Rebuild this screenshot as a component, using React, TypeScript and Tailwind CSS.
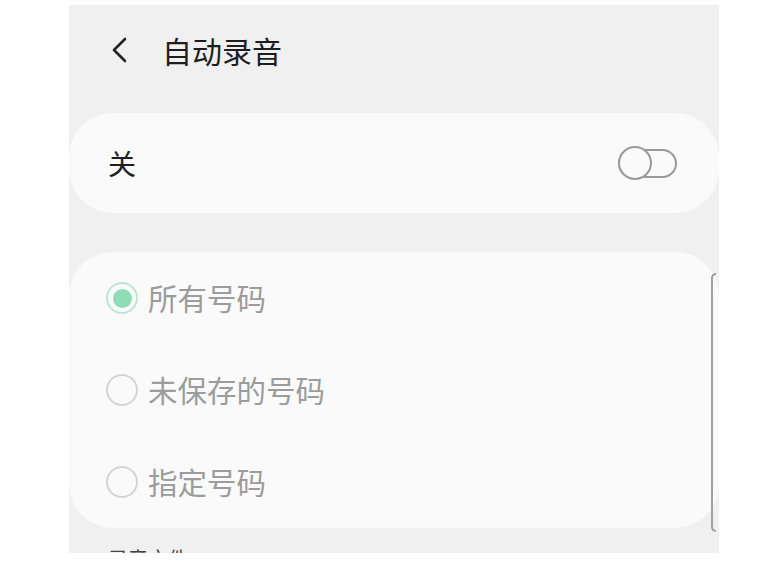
import React from "react";

const font = { fontFamily: '"Noto Sans CJK SC", "Noto Sans", sans-serif' };

function Radio({ checked }: { checked?: boolean }) {
  return checked ? (
    <div className="w-[32px] h-[32px] rounded-full border-2 border-[#bde6d2] flex items-center justify-center shrink-0">
      <div className="w-[19px] h-[19px] rounded-full bg-[#8fdcb6]" />
    </div>
  ) : (
    <div className="w-[32px] h-[32px] rounded-full border-2 border-[#d4d4d4] shrink-0" />
  );
}

export default function App() {
  const options = [
    { label: "所有号码", checked: true },
    { label: "未保存的号码" },
    { label: "指定号码" },
  ];
  return (
    <div className="w-[776px] h-[561px] bg-white overflow-hidden" style={font}>
      <div className="ml-[69px] mt-[5px] w-[650px] h-[548px] bg-[#f0f0f0] overflow-hidden relative flex flex-col">
        <div className="h-[90px] flex items-center pl-[42px] shrink-0">
          <svg width="17" height="26" viewBox="0 0 17 26" fill="none" className="shrink-0">
            <path d="M14 2 L3 13 L14 24" stroke="#222" strokeWidth="2.6" strokeLinecap="round" strokeLinejoin="round" />
          </svg>
          <span className="ml-[34px] text-[30px] leading-none text-[#1e1e1e]">自动录音</span>
        </div>
        <div className="mt-[18px] h-[100px] rounded-[44px] bg-[#fafafa] flex items-center justify-between pl-[39px] pr-[42px] shrink-0">
          <span className="text-[28px] leading-none text-[#1e1e1e]">关</span>
          <div className="relative w-[59px] h-[34px] flex items-center">
            <div className="absolute left-0 right-0 top-[3px] h-[29px] rounded-full border-2 border-[#9a9a9a]" />
            <div className="absolute left-0 top-0 w-[34px] h-[34px] rounded-full border-2 border-[#9a9a9a] bg-[#fafafa]" />
          </div>
        </div>
        <div className="mt-[39px] h-[276px] rounded-[44px] bg-[#fafafa] flex flex-col shrink-0">
          {options.map((o) => (
            <div key={o.label} className="h-[92px] flex items-center pl-[37px]">
              <Radio checked={o.checked} />
              <span className="ml-[10px] text-[29.5px] leading-none text-[#9c9c9c]">{o.label}</span>
            </div>
          ))}
        </div>
        <div className="mt-[21px] pl-[39px] text-[20px] leading-none text-[#444]">录音文件</div>
        <div className="absolute right-[3px] top-[268px] h-[259px] w-[5px] border-l-2 border-t-2 border-b-2 border-[#a0a0a0] rounded-l-[8px]" />
      </div>
    </div>
  );
}
